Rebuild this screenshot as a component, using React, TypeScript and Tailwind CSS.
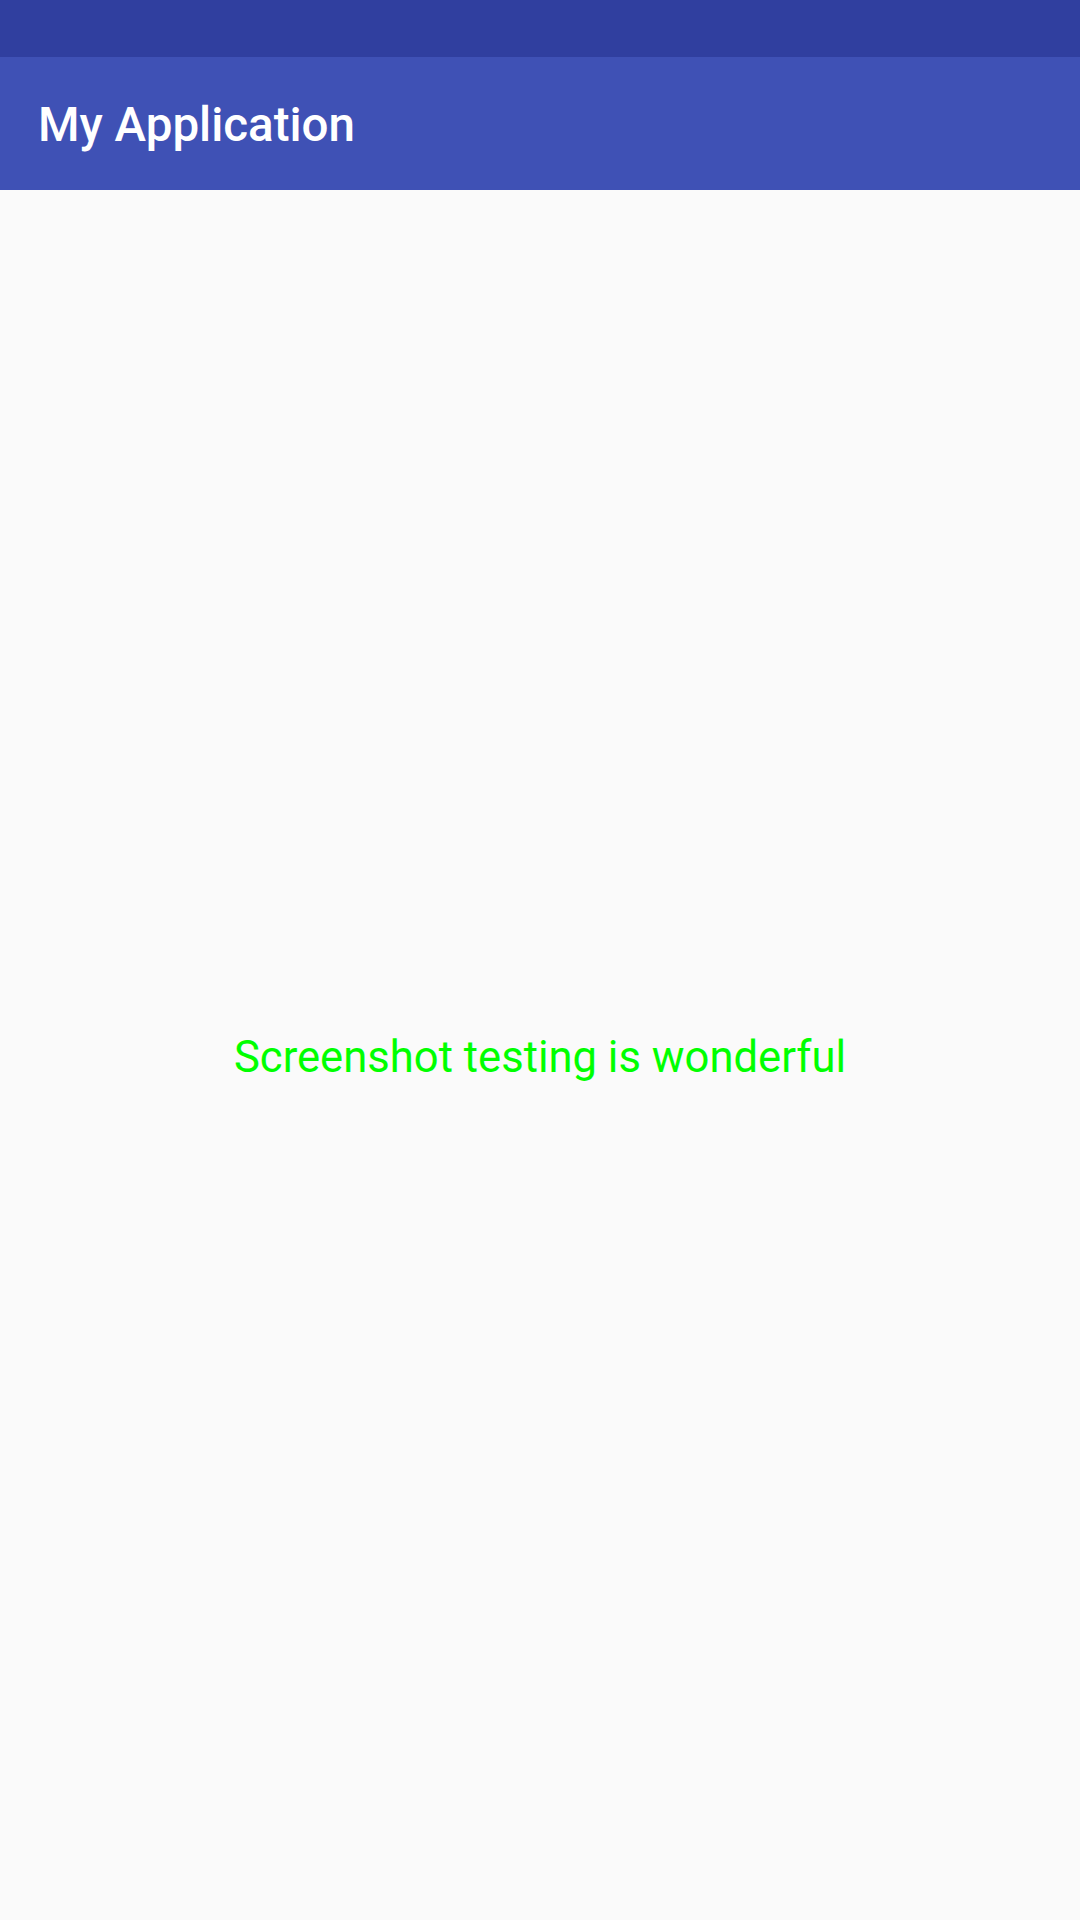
import React from 'react'

export default function App() {
  return (
    <div className="flex h-[1920px] w-[1080px] flex-col bg-[#fafafa] font-['Roboto',sans-serif]">
      {/* status bar */}
      <div className="h-[57px] w-full bg-[#303f9f]" />

      {/* toolbar */}
      <div className="flex h-[133px] w-full items-center bg-[#3f51b5] px-[38px] pt-[5px]">
        <h1 className="text-[47.5px] font-medium leading-none text-white">My Application</h1>
      </div>

      {/* content */}
      <div className="flex flex-1 items-center justify-center pt-[5px]">
        <p className="text-[43.6px] leading-none text-[#00ff00]">Screenshot testing is wonderful</p>
      </div>
    </div>
  )
}
